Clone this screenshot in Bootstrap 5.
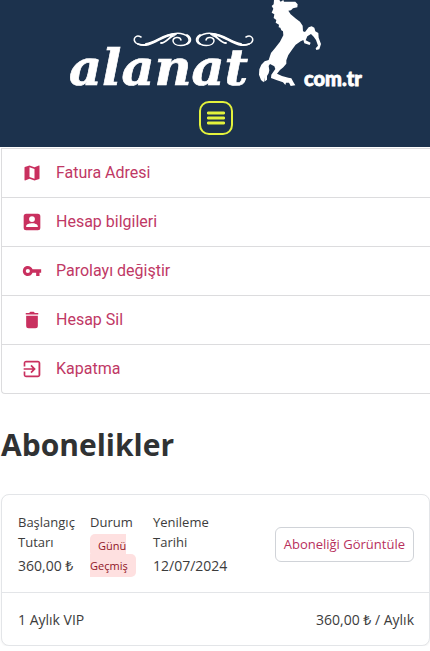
<!DOCTYPE html>
<html lang="tr">
<head>
<meta charset="utf-8">
<meta name="viewport" content="width=device-width, initial-scale=1">
<title>Abonelikler</title>
<link href="https://cdn.jsdelivr.net/npm/bootstrap@5.3.0/dist/css/bootstrap.min.css" rel="stylesheet">
<style>
body{font-family:"Open Sans","Noto Sans",sans-serif;color:#3c3c3c;font-size:13px;line-height:20px;background:#fff}
.site-head{background:#1c324d;height:147px;padding-left:2px}
.logo{width:300px;height:90px;overflow:visible}
.logo-word{font:italic 700 51px "DejaVu Serif",serif}
.logo-domain{font:900 20px Lato,sans-serif}
.menu-btn{width:34px;height:34px;margin-top:11px;border:2px solid #e3f23c;border-radius:10px;background:none;color:#e3f23c}
.account-nav{margin:1px 0 0 1px;border-color:#dcdcde;--bs-list-group-border-color:#dcdcde}
.account-nav .list-group-item{height:49px;padding:0 20px;gap:14px;border-right:0;font:16px/24px Roboto,sans-serif;color:#c03865;border-radius:0}
.account-nav .list-group-item:first-child{height:50px}
.account-nav .list-group-item:last-child{border-bottom-left-radius:4px}
.account-nav svg{width:20px;height:20px;fill:#c9305f}
.page-title{font-size:30px;line-height:40px;font-weight:700;margin:31px 0 29px 1px;color:#303233}
.sub-card{margin-left:1px;border-color:#e3e5e8;border-radius:8px;box-shadow:0 1px 2px #0000000d}
.sub-main{padding:17px 15px 16px 16px}
.col-start{width:72px}.col-state{width:63px}.col-renew{width:80px}
.col-state dd{width:50px}
.sub-main dt{white-space:nowrap}
.sub-value{margin-top:4px;font-size:14px}
.state-value{line-height:20px;font-size:12px}
.state-tag{background:#fee0e0;color:#8f1526;font-size:11px;padding:4px 8px;border-radius:5px}
.view-btn{height:35px;padding:0 8px;font-size:13px;line-height:20px;color:#b8305c;border:1px solid #d0d3d8;border-radius:6px;background:#fff;white-space:nowrap}
.sub-foot{padding:17px 15px 15px 16px;border-top:1px solid #e3e5e8;font-size:14px}
</style>
</head>
<body>
<header class="site-head d-flex flex-column align-items-center">
<a href="#" aria-label="alanat.com.tr" class="d-block lh-1">
<svg class="logo d-block" viewBox="66 0 300 90" fill="#fff">
<text class="logo-word" x="69" y="85" stroke="#fff" stroke-width=".7">alanat</text>
<text class="logo-domain" x="304" y="86" stroke="#fff" stroke-width=".8">com.tr</text>
<g fill="none" stroke="#fff" stroke-width="1.5" stroke-linecap="round">
<g id="flourish"><path d="M141 37C136 34 132 39 136 43C144 49 158 39 169 35C180 31 190 35 189 41C187 47 174 47 173 41C173 37 180 36 181 40" /><path stroke-width="1.8" d="M138 44C149 49 160 37 171 35M146 44C157 42 163 34 176 34M161 43C167 43 169 36 175 35M187 35C192 38 191 42 187 44"/></g>
<use href="#flourish" transform="matrix(-1 0 0 1 387 0)"/>
</g>
<path transform="translate(256 0) scale(.3333)" d="M54 0L70 0L74 5L82 0L84 5L118 5L125 13L124 22L111 25L105 31L97 32L104 43L120 56L132 65L140 77L141 94L147 96L158 82L167 79L175 83L178 94L187 99L188 113L195 132L190 148L181 150L179 145L186 137L180 120L173 110L165 102L154 109L149 121L164 128L161 135L145 130L142 120L134 124L119 134L108 149L97 165L91 181L91 191L82 202L72 210L63 221L78 228L97 233L106 235L112 246L118 256L104 258L99 248L90 248L88 255L81 247L61 240L45 234L46 224L58 207L55 199L42 192L38 198L40 211L38 220L33 228L33 239L25 245L27 232L23 247L15 240L9 224L10 208L16 194L26 184L38 180L45 159L58 143L72 125L82 106L81 94L76 91L73 83L68 82L69 74L59 68L61 60L53 54L55 43L47 38L52 26L47 18L53 13Z"/>
</svg>
</a>
<button class="menu-btn d-flex align-items-center justify-content-center p-0" aria-label="Menü"><svg width="18" height="14" viewBox="0 0 18 14" fill="none" stroke="currentColor" stroke-width="2.8" stroke-linecap="round"><path d="M1.2 2H16.8M1.2 7H16.8M1.2 12H16.8"/></svg></button>
</header>
<main>
<nav class="account-nav list-group" aria-label="Hesap">
<a href="#" class="list-group-item d-flex align-items-center"><svg viewBox="0 0 24 24"><path fill-rule="evenodd" d="M20.500 3L20.340 3.030L15 5.100L9 3L3.360 4.900C3.150 4.970 3 5.150 3 5.380V20.500C3 20.800 3.300 21.050 3.660 20.970L9 18.900L15 21L20.640 19.100C20.850 19.030 21 18.850 21 18.620V3.500C21 3.220 20.780 3 20.500 3ZM15 19L9 16.890V5L15 7.110Z"/></svg>Fatura Adresi</a>
<a href="#" class="list-group-item d-flex align-items-center"><svg viewBox="0 0 24 24"><path fill-rule="evenodd" d="M5 2H19Q22 2 22 5V19Q22 22 19 22H5Q2 22 2 19V5Q2 2 5 2ZM12 5a3.500 3.500 0 1 0 0 7a3.500 3.500 0 1 0 0-7ZM5 18H19V17C19 14.500 14.500 13.500 12 13.500S5 14.500 5 17Z"/></svg>Hesap bilgileri</a>
<a href="#" class="list-group-item d-flex align-items-center"><svg viewBox="0 0 24 24"><path fill-rule="evenodd" d="M12.650 10C11.700 7.310 8.900 5.500 5.770 6.120C3.480 6.580 1.620 8.410 1.140 10.700C.320 14.570 3.260 18 7 18C9.610 18 11.830 16.330 12.650 14H17V18H21V14H23V10ZM7 9.500a2.500 2.500 0 1 0 0 5a2.500 2.500 0 1 0 0-5Z"/></svg>Parolayı değiştir</a>
<a href="#" class="list-group-item d-flex align-items-center"><svg viewBox="0 0 24 24"><path d="M5 7H19V19Q19 22 16 22H8Q5 22 5 19ZM4.500 3.500H8.500L10 2H14L15.500 3.500H19.500V5.500H4.500Z"/></svg>Hesap Sil</a>
<a href="#" class="list-group-item d-flex align-items-center"><svg viewBox="0 0 24 24"><path d="M10.090 15.590L11.500 17L16.500 12L11.500 7L10.090 8.410L12.670 11H2V13H12.670ZM19 2H5C3.300 2 2 3.300 2 5V9H4V4.200H19.800V19.800H4V15H2V19C2 20.700 3.300 22 5 22H19C20.700 22 22 20.700 22 19V5C22 3.300 20.700 2 19 2Z"/></svg>Kapatma</a>
</nav>
<h1 class="page-title">Abonelikler</h1>
<section class="sub-card card">
<div class="sub-main d-flex justify-content-between align-items-start">
<dl class="d-flex mb-0">
<div class="col-start"><dt class="fw-normal">Başlangıç<br>Tutarı</dt><dd class="sub-value mb-0">360,00 ₺</dd></div>
<div class="col-state"><dt class="fw-normal">Durum</dt><dd class="state-value mt-1 mb-0"><span class="state-tag">Günü Geçmiş</span></dd></div>
<div class="col-renew"><dt class="fw-normal">Yenileme<br>Tarihi</dt><dd class="sub-value mb-0">12/07/2024</dd></div>
</dl>
<button class="view-btn align-self-center">Aboneliği Görüntüle</button>
</div>
<div class="sub-foot d-flex justify-content-between"><span>1 Aylık VIP</span><span>360,00 ₺ / Aylık</span></div>
</section>
</main>
<script src="https://cdn.jsdelivr.net/npm/bootstrap@5.3.0/dist/js/bootstrap.bundle.min.js"></script>
</body>
</html>
